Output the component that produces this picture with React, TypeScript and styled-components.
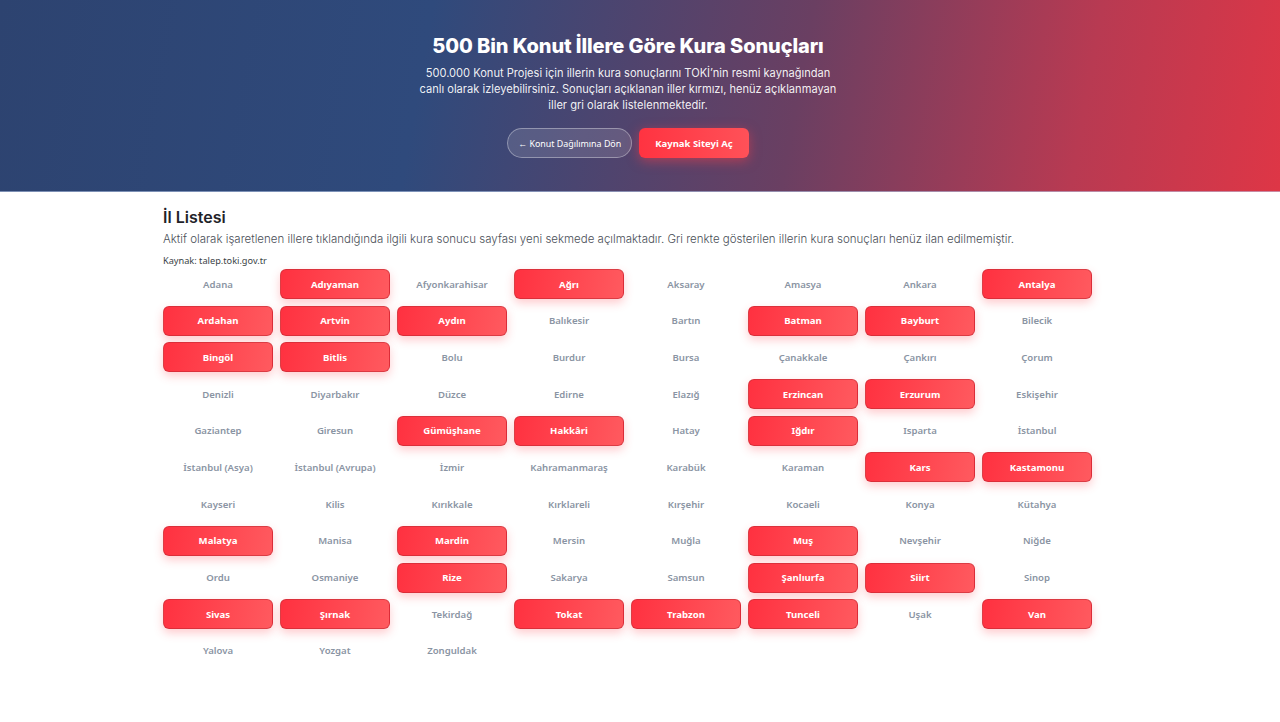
import * as React from "react";
import styled, { createGlobalStyle } from "styled-components";

const GlobalStyle = createGlobalStyle`
  html, body {
    margin: 0;
    padding: 0;
    background: #ffffff;
  }
  body {
    font-family: "Noto Sans", "Open Sans", sans-serif;
    -webkit-font-smoothing: antialiased;
  }
  * {
    box-sizing: border-box;
  }
`;

// content column sits 12px left of the window centre, as in the reference
const Hero = styled.header`
  width: 100%;
  height: 192px;
  padding: 34px 24px 0 0;
  background: linear-gradient(100deg, #2d4370 0%, #2f4a7c 33%, #6a3f62 62%, #b83a52 84%, #de3646 100%);
  border-bottom: 1px solid rgba(190, 205, 235, 0.55);
  color: #ffffff;
  text-align: center;
`;

const Title = styled.h1`
  margin: 0;
  font-family: "Inter", sans-serif;
  font-size: 20px;
  line-height: 24px;
  font-weight: 800;
  letter-spacing: -0.1px;
`;

const Lead = styled.p`
  width: 424px;
  margin: 7px auto 0;
  font-family: "Inter", sans-serif;
  font-size: 11.1px;
  line-height: 16px;
  font-weight: 400;
  color: rgba(255, 255, 255, 0.93);
`;

const Actions = styled.div`
  display: flex;
  justify-content: center;
  gap: 7px;
  margin-top: 15px;
`;

const GhostButton = styled.a`
  display: flex;
  align-items: center;
  height: 30px;
  padding: 0 10px;
  border-radius: 16px;
  border: 1px solid rgba(255, 255, 255, 0.35);
  background: rgba(255, 255, 255, 0.12);
  color: #ffffff;
  font-size: 8.9px;
  text-decoration: none;
`;

const PrimaryButton = styled.a`
  display: flex;
  align-items: center;
  height: 30px;
  padding: 0 16px;
  border-radius: 6px;
  background: linear-gradient(90deg, #ff3341, #ff5158);
  box-shadow: 0 3px 12px rgba(255, 60, 72, 0.5);
  color: #ffffff;
  font-size: 9.5px;
  font-weight: 700;
  text-decoration: none;
`;

const Page = styled.div`
  padding-right: 25px;
`;

const Section = styled.main`
  width: 929px;
  margin: 0 auto;
  padding: 15px 0 40px;
`;

const SectionTitle = styled.h2`
  margin: 0;
  font-family: "Inter", sans-serif;
  font-size: 16px;
  line-height: 20px;
  font-weight: 600;
  color: #1f2329;
`;

const Note = styled.p`
  margin: 4px 0 0;
  font-family: "Inter", sans-serif;
  font-size: 11.5px;
  line-height: 16px;
  font-weight: 300;
  color: #4a4f57;
`;

const Source = styled.div`
  margin-top: 8px;
  font-size: 9.2px;
  line-height: 12px;
  color: #3a3f46;
`;

const Grid = styled.div`
  display: grid;
  grid-template-columns: repeat(8, 110px);
  grid-auto-rows: 30px;
  column-gap: 7px;
  row-gap: 6.7px;
  margin-top: 2px;
`;

const City = styled.a<{ $active: boolean }>`
  display: flex;
  align-items: center;
  justify-content: center;
  border-radius: 6px;
  font-size: 9.6px;
  font-weight: ${(p) => (p.$active ? 700 : 600)};
  text-decoration: none;
  white-space: nowrap;
  color: ${(p) => (p.$active ? "#ffffff" : "#8a94a3")};
  background: ${(p) => (p.$active ? "linear-gradient(100deg, #ff3140 0%, #ff5a5f 100%)" : "transparent")};
  border: 1px solid ${(p) => (p.$active ? "rgba(190, 40, 50, 0.55)" : "transparent")};
  box-shadow: ${(p) => (p.$active ? "0 4px 10px rgba(255, 70, 80, 0.28)" : "none")};
`;

const cities: [string, boolean][] = [
  ["Adana", false], ["Adıyaman", true], ["Afyonkarahisar", false], ["Ağrı", true],
  ["Aksaray", false], ["Amasya", false], ["Ankara", false], ["Antalya", true],
  ["Ardahan", true], ["Artvin", true], ["Aydın", true], ["Balıkesir", false],
  ["Bartın", false], ["Batman", true], ["Bayburt", true], ["Bilecik", false],
  ["Bingöl", true], ["Bitlis", true], ["Bolu", false], ["Burdur", false],
  ["Bursa", false], ["Çanakkale", false], ["Çankırı", false], ["Çorum", false],
  ["Denizli", false], ["Diyarbakır", false], ["Düzce", false], ["Edirne", false],
  ["Elazığ", false], ["Erzincan", true], ["Erzurum", true], ["Eskişehir", false],
  ["Gaziantep", false], ["Giresun", false], ["Gümüşhane", true], ["Hakkâri", true],
  ["Hatay", false], ["Iğdır", true], ["Isparta", false], ["İstanbul", false],
  ["İstanbul (Asya)", false], ["İstanbul (Avrupa)", false], ["İzmir", false], ["Kahramanmaraş", false],
  ["Karabük", false], ["Karaman", false], ["Kars", true], ["Kastamonu", true],
  ["Kayseri", false], ["Kilis", false], ["Kırıkkale", false], ["Kırklareli", false],
  ["Kırşehir", false], ["Kocaeli", false], ["Konya", false], ["Kütahya", false],
  ["Malatya", true], ["Manisa", false], ["Mardin", true], ["Mersin", false],
  ["Muğla", false], ["Muş", true], ["Nevşehir", false], ["Niğde", false],
  ["Ordu", false], ["Osmaniye", false], ["Rize", true], ["Sakarya", false],
  ["Samsun", false], ["Şanlıurfa", true], ["Siirt", true], ["Sinop", false],
  ["Sivas", true], ["Şırnak", true], ["Tekirdağ", false], ["Tokat", true],
  ["Trabzon", true], ["Tunceli", true], ["Uşak", false], ["Van", true],
  ["Yalova", false], ["Yozgat", false], ["Zonguldak", false],
];

const App = () => {
  return (
    <>
      <GlobalStyle />
      <Hero>
        <Title>500 Bin Konut İllere Göre Kura Sonuçları</Title>
        <Lead>
          500.000 Konut Projesi için illerin kura sonuçlarını TOKİ’nin resmi kaynağından canlı olarak
          izleyebilirsiniz. Sonuçları açıklanan iller kırmızı, henüz açıklanmayan iller gri olarak
          listelenmektedir.
        </Lead>
        <Actions>
          <GhostButton href="#">← Konut Dağılımına Dön</GhostButton>
          <PrimaryButton href="#">Kaynak Siteyi Aç</PrimaryButton>
        </Actions>
      </Hero>
      <Page>
        <Section>
          <SectionTitle>İl Listesi</SectionTitle>
          <Note>
            Aktif olarak işaretlenen illere tıklandığında ilgili kura sonucu sayfası yeni sekmede
            açılmaktadır. Gri renkte gösterilen illerin kura sonuçları henüz ilan edilmemiştir.
          </Note>
          <Source>Kaynak: talep.toki.gov.tr</Source>
          <Grid>
            {cities.map(([name, active]) => (
              <City key={name} href="#" $active={active}>
                {name}
              </City>
            ))}
          </Grid>
        </Section>
      </Page>
    </>
  );
};

export default App;
